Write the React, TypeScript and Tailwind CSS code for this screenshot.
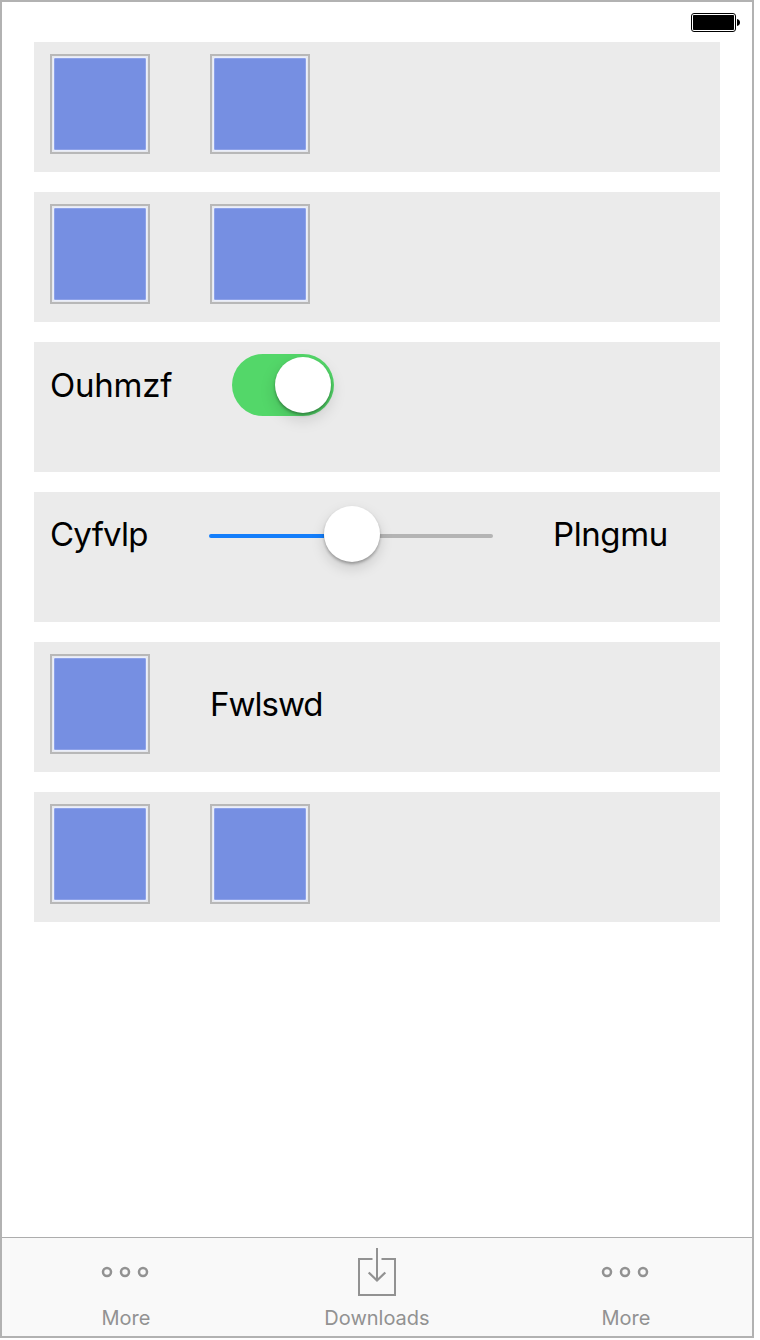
import React from "react";

function Card({ children }: { children: React.ReactNode }) {
  return <section className="flex h-[130px] w-[686px] items-start bg-[#ebebeb] pl-4 pt-3">{children}</section>;
}

function Tile() {
  return (
    <div className="mr-[60px] size-[100px] shrink-0 border-2 border-[#b8b8b8] bg-[#e6e8ee] p-px">
      <div className="size-full rounded-[2px] border border-[#eaeefb] bg-[#eaeefb]">
        <div className="size-full rounded-[1px] border border-[#8da1e8] bg-[#768fe2]" />
      </div>
    </div>
  );
}

function Battery() {
  return (
    <svg width="50" height="20" viewBox="0 0 50 20" aria-hidden="true">
      <rect x="0.5" y="0.5" width="44" height="18" rx="2.5" fill="#fff" stroke="#000" />
      <rect x="2" y="2" width="41" height="15" rx="0.8" />
      <path d="M46 6c2 .3 3 1.700 3 3.500s-1 3.200-3 3.500z" />
    </svg>
  );
}

function MoreIcon() {
  return (
    <svg width="50" height="50" viewBox="0 0 50 50" fill="none" stroke="#929292" strokeWidth="2.5" aria-hidden="true">
      <circle cx="6" cy="25" r="4" />
      <circle cx="24" cy="25" r="4" />
      <circle cx="42" cy="25" r="4" />
    </svg>
  );
}

function DownloadIcon() {
  return (
    <svg width="50" height="50" viewBox="0 0 50 50" fill="none" stroke="#929292" strokeWidth="2" aria-hidden="true">
      <path d="M20.500 12H7v36h36V12H29.500M25 1v33" />
      <path d="M16.700 25.500l8.300 8 8.300-8" strokeWidth="2.3" />
    </svg>
  );
}

function Tab({ label, children }: { label: string; children: React.ReactNode }) {
  return (
    <button className="flex flex-col items-center pt-[9px] text-[#929292]">
      {children}
      <span className="mt-[9px] text-[20px] leading-6">{label}</span>
    </button>
  );
}

export default function App() {
  return (
    <div className="flex h-[1340px] w-[760px] bg-white font-['Inter',sans-serif] text-black">
      <div className="flex h-[1338px] w-[754px] flex-col border-2 border-[#b2b2b2]">
        <header className="flex h-10 justify-end pr-[11px] pt-[11px]">
          <Battery />
        </header>
        <main className="flex grow flex-col gap-5 pl-8">
          <Card><Tile /><Tile /></Card>
          <Card><Tile /><Tile /></Card>
          <Card>
            <span className="mt-[11px] w-[182px] text-[33px] leading-10 tracking-[-0.25px]">Ouhmzf</span>
            <button role="switch" aria-checked="true" aria-label="Ouhmzf" className="flex h-[62px] w-[102px] justify-end rounded-full bg-[#53d769] p-[3px]">
              <span className="size-14 rounded-full bg-white shadow-[0_6px_16px_rgba(0,0,0,0.15),0_2px_3px_rgba(0,0,0,0.32)]" />
            </button>
          </Card>
          <Card>
            <span className="mt-[10px] w-[159px] text-[33px] leading-10 tracking-[-0.75px]">Cyfvlp</span>
            <div className="mt-[2px] flex h-14 w-[284px] items-center">
              <span className="mt-1 h-1 w-[115px] rounded-l-full bg-[#147efb]" />
              <span className="z-10 size-14 shrink-0 rounded-full bg-white shadow-[0_6px_14px_rgba(0,0,0,0.15),0_2px_3px_rgba(0,0,0,0.28)]" />
              <span className="mt-1 h-1 w-[113px] rounded-r-full bg-[#b4b4b4]" />
            </div>
            <span className="ml-[60px] mt-[10px] text-[33px] leading-10 tracking-[-0.4px]">Plngmu</span>
          </Card>
          <Card>
            <Tile />
            <span className="mt-[30px] text-[33px] leading-10 tracking-[-1px]">Fwlswd</span>
          </Card>
          <Card><Tile /><Tile /></Card>
        </main>
        <nav className="grid h-[99px] grid-cols-[248px_254px_244px] border-t border-[#adadad] bg-[#f9f9f9]">
          <Tab label="More"><MoreIcon /></Tab>
          <Tab label="Downloads"><DownloadIcon /></Tab>
          <Tab label="More"><MoreIcon /></Tab>
        </nav>
      </div>
    </div>
  );
}
